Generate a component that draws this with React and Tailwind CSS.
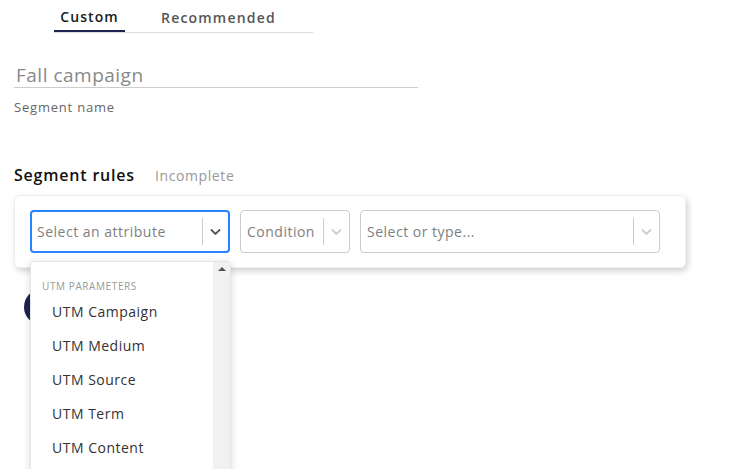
import React from "react";

const font = { fontFamily: '"Open Sans", "Liberation Sans", sans-serif' };

const Chevron = ({ className }) => (
  <svg viewBox="0 0 20 20" className={className} fill="currentColor">
    <path d="M4.516 7.548c0.436-0.446 1.043-0.481 1.576 0l3.908 3.747 3.908-3.747c0.533-0.481 1.141-0.446 1.574 0 0.436 0.445 0.408 1.197 0 1.615-0.406 0.418-4.695 4.502-4.695 4.502-0.217 0.223-0.502 0.335-0.787 0.335s-0.57-0.112-0.789-0.335c0 0-4.287-4.084-4.695-4.502s-0.436-1.17 0-1.615z" />
  </svg>
);

const Select = ({ placeholder, width, focused }) => (
  <div
    className={`flex items-center h-[43px] rounded-[4px] bg-white ${width} ${
      focused ? "border-2 border-[#2684ff]" : "border border-[#cccccc]"
    }`}>
    <span className={`flex-1 text-[14px] tracking-[0.5px] text-[#808080] ${focused ? "pl-[5px]" : "pl-[6px]"}`}>
      {placeholder}
    </span>
    <span className="w-px h-[27px] bg-[#cccccc]" />
    <span className="px-[4px] flex items-center">
      <Chevron className={`w-[17px] h-[17px] ${focused ? "text-[#555]" : "text-[#cccccc]"}`} />
    </span>
  </div>
);

const options = ["UTM Campaign", "UTM Medium", "UTM Source", "UTM Term", "UTM Content"];

export default function App() {
  return (
    <div className="relative w-[746px] h-[469px] overflow-hidden bg-white" style={font}>
      <div className="ml-[54px] w-[259px] flex border-b border-[#dddddd]">
        <button className="w-[71px] h-[32px] pt-[2px] -mb-px border-b-2 border-[#1f2352] text-[14px] font-semibold tracking-[1.1px] text-[#1a1a1a]">
          Custom
        </button>
        <button className="ml-[30px] px-[6px] h-[32px] pt-[2px] text-[14px] font-semibold tracking-[1.2px] text-[#555555]">
          Recommended
        </button>
      </div>

      <div className="ml-[14px] mt-[26px] w-[404px] h-[29px] pt-[4px] border-b border-[#cccccc] flex items-center">
        <span className="pl-[2px] text-[19px] tracking-[0.5px] text-[#888888]">Fall campaign</span>
      </div>
      <div className="ml-[14px] mt-[10px] text-[13px] tracking-[0.8px] text-[#666666]">Segment name</div>

      <div className="ml-[14px] mt-[45px] flex items-baseline gap-[20px]">
        <span className="text-[16px] font-semibold tracking-[0.8px] text-[#111111]">Segment rules</span>
        <span className="text-[14px] tracking-[0.6px] text-[#999999]">Incomplete</span>
      </div>

      <div className="ml-[14px] mt-[8px] w-[672px] rounded-[6px] border border-[#eeeeee] shadow-[2px_3px_6px_rgba(0,0,0,0.18)] px-[15px] py-[14px] flex gap-[10px]">
        <Select placeholder="Select an attribute" width="w-[200px]" focused />
        <Select placeholder="Condition" width="w-[110px]" />
        <Select placeholder="Select or type..." width="w-[300px]" />
      </div>

      <div className="ml-[24px] mt-[21px] w-[36px] h-[36px] rounded-full bg-[#1f2352]" />

      <div className="absolute left-[30px] top-[261px] w-[201px] h-[220px] bg-white rounded-[4px] border border-[#e5e5e5] shadow-[0_2px_8px_rgba(0,0,0,0.15)] flex overflow-hidden">
        <div className="flex-1 pt-[17px]">
          <div className="pl-[11px] text-[10px] font-medium text-[#999999] tracking-[0.6px]">UTM PARAMETERS</div>
          <div>
            {options.map((o) => (
              <div key={o} className="pl-[21px] h-[34px] flex items-center text-[14px] tracking-[0.5px] text-[#333333]">
                {o}
              </div>
            ))}
          </div>
        </div>
        <div className="w-[17px] bg-[#f1f1f1] flex justify-center pt-[5px]">
          <div className="w-0 h-0 border-l-[4px] border-r-[4px] border-b-[4px] border-l-transparent border-r-transparent border-b-[#555555]" />
        </div>
      </div>
    </div>
  );
}
